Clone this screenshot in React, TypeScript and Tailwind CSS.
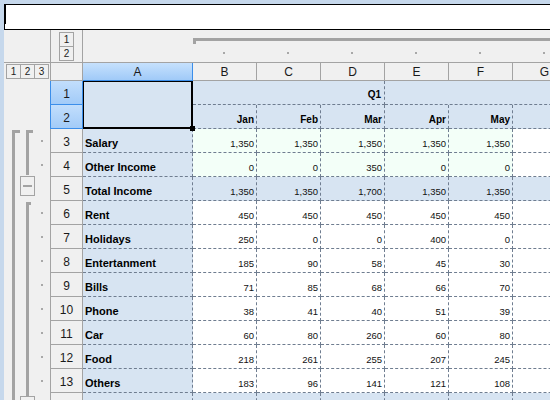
import React from 'react';

type Kind = 'in' | 'total' | 'exp';
type Row = { n: number; label: string; vals: string[]; kind: Kind };

const rows: Row[] = [
  { n: 3, label: 'Salary', vals: ['1,350', '1,350', '1,350', '1,350', '1,350'], kind: 'in' },
  { n: 4, label: 'Other Income', vals: ['0', '0', '350', '0', '0'], kind: 'in' },
  { n: 5, label: 'Total Income', vals: ['1,350', '1,350', '1,700', '1,350', '1,350'], kind: 'total' },
  { n: 6, label: 'Rent', vals: ['450', '450', '450', '450', '450'], kind: 'exp' },
  { n: 7, label: 'Holidays', vals: ['250', '0', '0', '400', '0'], kind: 'exp' },
  { n: 8, label: 'Entertanment', vals: ['185', '90', '58', '45', '30'], kind: 'exp' },
  { n: 9, label: 'Bills', vals: ['71', '85', '68', '66', '70'], kind: 'exp' },
  { n: 10, label: 'Phone', vals: ['38', '41', '40', '51', '39'], kind: 'exp' },
  { n: 11, label: 'Car', vals: ['60', '80', '260', '60', '80'], kind: 'exp' },
  { n: 12, label: 'Food', vals: ['218', '261', '255', '207', '245'], kind: 'exp' },
  { n: 13, label: 'Others', vals: ['183', '96', '141', '121', '108'], kind: 'exp' },
];

const months = ['Jan', 'Feb', 'Mar', 'Apr', 'May'];
const cols = ['B', 'C', 'D', 'E', 'F', 'G'];

const cell = 'border-r border-b border-dashed border-[#6f7d90]';

const OutlineButton = ({ label }: { label: string }) => (
  <div className="w-[15px] h-[15px] -ml-px first:ml-0 border border-[#a3a3a3] flex items-center justify-center text-[10px] leading-none text-[#222]">
    {label}
  </div>
);

function LeftOutline() {
  const dots = [3, 4, 6, 7, 8, 9, 10, 11, 12, 13];
  return (
    <svg width="46" height="319" className="block">
      <rect x="8" y="49" width="3" height="270" fill="#a3a3a3" />
      <rect x="8" y="49" width="8" height="3" fill="#a3a3a3" />
      <rect x="22" y="49" width="3" height="45" fill="#a3a3a3" />
      <rect x="22" y="49" width="7" height="3" fill="#a3a3a3" />
      <rect x="16.5" y="95.5" width="14" height="19" fill="#f0f0f0" stroke="#a3a3a3" />
      <rect x="19" y="104" width="9" height="2" fill="#a3a3a3" />
      <rect x="22" y="121" width="3" height="194" fill="#a3a3a3" />
      <rect x="22" y="121" width="5" height="3" fill="#a3a3a3" />
      <rect x="16.5" y="315.5" width="14" height="15" fill="#f0f0f0" stroke="#a3a3a3" />
      {dots.map((r) => (
        <rect key={r} x="37" y={(r - 1) * 24 + 11} width="2" height="2" fill="#a8a8a8" />
      ))}
    </svg>
  );
}

function TopOutline() {
  return (
    <svg width="467" height="32" className="block">
      <rect x="110" y="8" width="360" height="3" fill="#a3a3a3" />
      <rect x="110" y="8" width="3" height="6" fill="#a3a3a3" />
      {cols.map((c, i) => (
        <rect key={c} x={140 + i * 64} y="22" width="2" height="2" fill="#a8a8a8" />
      ))}
    </svg>
  );
}

export default function App() {
  return (
    <div className="w-[550px] h-[400px] overflow-hidden bg-[#c6d8ec] pl-1 pt-1 font-['Liberation_Sans',Arial,sans-serif] text-black">
      {/* formula / edit box */}
      <div className="relative h-[26px] bg-white border-y border-l border-black">
        <div className="absolute left-0 top-0 w-px h-[19px] bg-black" />
      </div>

      <div className="bg-[#f0f0f0] h-full overflow-hidden">
        {/* column outline band */}
        <div className="flex h-[32px]">
          <div className="w-[46px] shrink-0" />
          <div className="w-[33px] shrink-0 border-l border-r border-[#a3a3a3] flex flex-col items-center pt-[2px]">
            <div className="w-[15px] h-[15px] border border-[#a3a3a3] flex items-center justify-center text-[10px] leading-none text-[#222]">1</div>
            <div className="w-[15px] h-[15px] -mt-px border border-[#a3a3a3] flex items-center justify-center text-[10px] leading-none text-[#222]">2</div>
          </div>
          <div className="flex-1">
            <TopOutline />
          </div>
        </div>

        {/* column headers */}
        <div className="flex h-[19px] border-t border-[#a3a3a3]">
          <div className="w-[46px] shrink-0 flex pl-[2px] pt-px">
            <OutlineButton label="1" />
            <OutlineButton label="2" />
            <OutlineButton label="3" />
          </div>
          <div className="w-[33px] shrink-0 border-l border-r border-b border-[#a3a3a3]" />
          <div className="w-[110px] shrink-0 border-b border-r border-[#3b8eea] bg-gradient-to-b from-[#c6e1fd] to-[#a0caf8] flex items-center justify-center text-[12px] leading-none text-[#1a1a1a]">
            A
          </div>
          {cols.map((c) => (
            <div
              key={c}
              className="w-[64px] shrink-0 border-r border-b border-[#a3a3a3] flex items-center justify-center text-[12px] leading-none text-[#1a1a1a]"
            >
              {c}
            </div>
          ))}
        </div>

        {/* body */}
        <div className="flex">
          <div className="w-[46px] shrink-0">
            <LeftOutline />
          </div>
          <div className="grid grid-cols-[33px_110px_repeat(6,64px)] auto-rows-[24px] shrink-0">
            {/* row 1 */}
            <div className="border-l border-r border-b border-[#3b8eea] bg-gradient-to-b from-[#c2defc] to-[#a2cbf8] flex items-center justify-center pt-[2px] text-[12px] text-[#1a1a1a]">
              1
            </div>
            <div className="row-span-2 relative bg-[#d7e4f2] border-l border-t border-r-2 border-b-2 border-black">
              <div className="absolute -right-[4px] -bottom-[4px] w-[5px] h-[5px] bg-black" />
            </div>
            <div className={`col-span-3 bg-[#d7e4f2] ${cell} flex items-end justify-end pr-[3px] pb-[3px] text-[10px] leading-[13px] font-bold`}>
              Q1
            </div>
            <div className={`col-span-3 bg-[#d7e4f2] ${cell}`} />

            {/* row 2 */}
            <div className="border-l border-r border-b border-[#3b8eea] bg-gradient-to-b from-[#c2defc] to-[#a2cbf8] flex items-center justify-center pt-[2px] text-[12px] text-[#1a1a1a]">
              2
            </div>
            {months.map((m) => (
              <div key={m} className={`bg-[#d7e4f2] ${cell} flex items-end justify-end pr-[2px] pb-[2px] text-[10px] leading-[13px] font-bold`}>
                {m}
              </div>
            ))}
            <div className={`bg-[#d7e4f2] ${cell}`} />

            {rows.map((r) => {
              const valBg = r.kind === 'in' ? 'bg-[#f3fff8]' : r.kind === 'total' ? 'bg-[#d7e4f2]' : 'bg-white';
              const lastBg = r.kind === 'total' ? 'bg-[#d7e4f2]' : 'bg-white';
              return (
                <React.Fragment key={r.n}>
                  <div className="border-l border-r border-b border-[#a3a3a3] flex items-center justify-center pt-[2px] text-[12px] text-[#1a1a1a]">
                    {r.n}
                  </div>
                  <div className={`bg-[#d7e4f2] ${cell} flex items-end pl-[2px] pb-[2px] text-[11px] leading-[13px] font-bold whitespace-nowrap`}>
                    {r.label}
                  </div>
                  {r.vals.map((v, i) => (
                    <div key={i} className={`${valBg} ${cell} flex items-end justify-end pr-[2px] pb-[2px] text-[9.5px] leading-[13px] text-[#111]`}>
                      {v}
                    </div>
                  ))}
                  <div className={`${lastBg} ${cell}`} />
                </React.Fragment>
              );
            })}

            {/* row 14 (cut off) */}
            <div className="border-l border-r border-b border-[#a3a3a3]" />
            <div className={`bg-[#d7e4f2] ${cell}`} />
            {cols.map((c) => (
              <div key={c} className={`bg-[#d7e4f2] ${cell}`} />
            ))}
          </div>
        </div>
      </div>
    </div>
  );
}
